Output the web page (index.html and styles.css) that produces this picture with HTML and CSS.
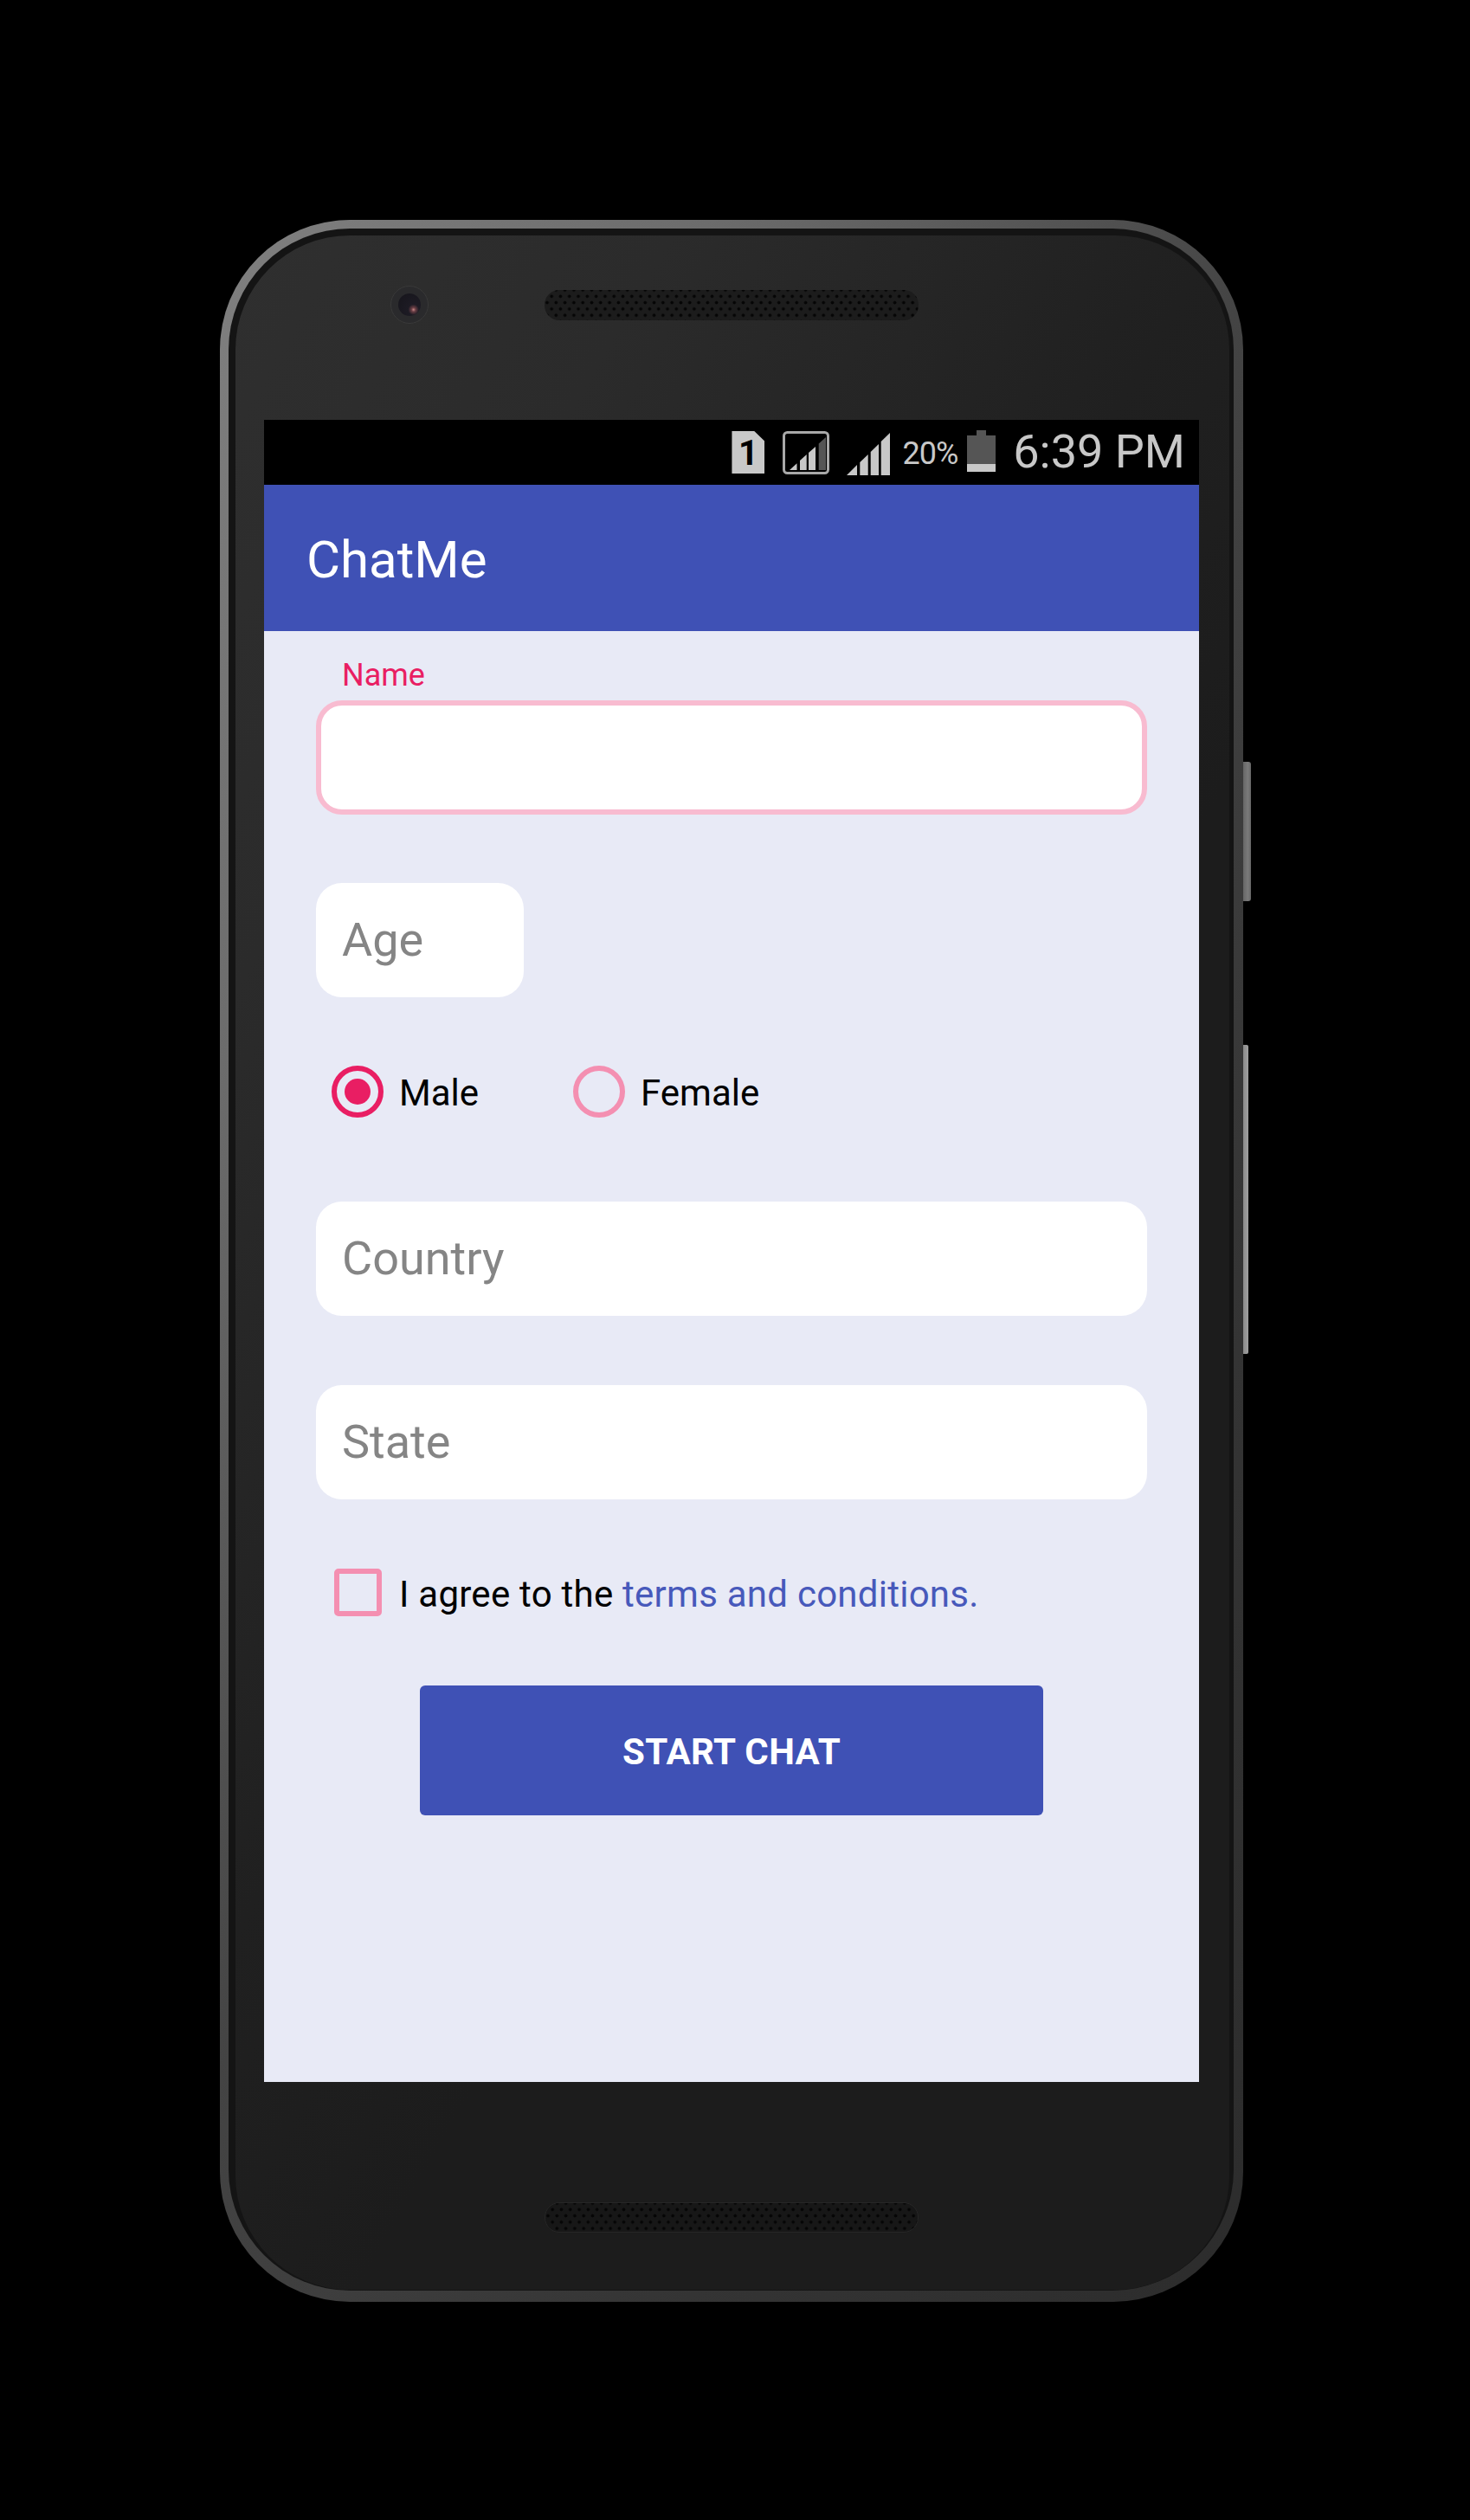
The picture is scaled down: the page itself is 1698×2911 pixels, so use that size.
FILE: index.html
```html
<!DOCTYPE html>
<html>
  <head>
    <title>ChatMe</title>
    <link rel="stylesheet" href="styles.css">
  </head>
  <body>
    <div class="device">
      <div class="phone">
        <div class="bezel">
          <div class="face">

            <div class="face-top">
              <div class="camera"><div class="lens"></div></div>
              <div class="speaker speaker-top"></div>
            </div>

            <div class="screen">
              <div class="status-bar">
                <div class="sim">1</div>
                <svg class="signal-box" width="54" height="50" viewBox="0 0 54 50">
                  <rect x="1.5" y="1.5" width="51" height="47" rx="4" fill="none" stroke="#a8a8a8" stroke-width="3"/>
                  <polygon points="8,45 16.5,45 16.5,37.3" fill="#c8c8c8"/>
                  <polygon points="20,45 27.7,45 27.7,27 20,34" fill="#c8c8c8"/>
                  <polygon points="30,45 38,45 38,18 30,25" fill="#c8c8c8"/>
                  <polygon points="41.7,45 50,45 50,7 41.7,14.5" fill="#555555"/>
                </svg>
                <svg class="signal" width="50" height="49" viewBox="0 0 50 49">
                  <polygon points="0,49 12,49 12,37" fill="#c8c8c8"/>
                  <polygon points="15.3,49 24.7,49 24.7,25 15.3,34" fill="#c8c8c8"/>
                  <polygon points="27.7,49 37,49 37,13 27.7,22" fill="#c8c8c8"/>
                  <polygon points="39.7,49 50,49 50,0 39.7,10" fill="#c8c8c8"/>
                </svg>
                <span class="battery-text">20%</span>
                <div class="battery">
                  <div class="battery-cap"></div>
                  <div class="battery-body"></div>
                </div>
                <span class="clock">6:39 PM</span>
              </div>

              <div class="app-bar">ChatMe</div>

              <div class="content">
                <label class="float-label">Name</label>
                <div class="field field-focus"></div>

                <div class="field field-age">Age</div>

                <div class="radio-row">
                  <div class="radio-item radio-male">
                    <span class="radio radio-on"></span>
                    <span class="radio-text">Male</span>
                  </div>
                  <div class="radio-item">
                    <span class="radio"></span>
                    <span class="radio-text">Female</span>
                  </div>
                </div>

                <div class="field field-country">Country</div>
                <div class="field field-state">State</div>

                <div class="agree-row">
                  <span class="checkbox"></span>
                  <span class="agree-text">I agree to the <a class="terms">terms and conditions.</a></span>
                </div>

                <button class="start-btn">START CHAT</button>
              </div>
            </div>

            <div class="face-bottom">
              <div class="speaker speaker-bottom"></div>
            </div>

          </div>
        </div>
      </div>

      <div class="side-keys">
        <div class="key-volume"></div>
        <div class="key-power"></div>
      </div>
    </div>
  </body>
</html>
```

FILE: styles.css
```css
html, body {
  margin: 0;
  background-color: #000000;
}

body {
  height: 2911px;
  padding: 254px 0 0 254px;
  box-sizing: border-box;
  font-family: Roboto, "Liberation Sans", sans-serif;
  overflow: hidden;
}

.device {
  display: flex;
  align-items: flex-start;
}

/* phone body */
.phone {
  width: 1182px;
  height: 2405px;
  box-sizing: border-box;
  padding: 10px 11px 13px 10px;
  border-radius: 150px;
  background: linear-gradient(120deg, #808080 0%, #6c6c6c 22%, #444444 48%, #343434 75%, #2c2c2c 100%);
}

.bezel {
  height: 100%;
  box-sizing: border-box;
  padding: 8px 5px 1px 8px;
  border-radius: 140px;
  background-color: #141414;
}

.face {
  height: 100%;
  border-radius: 132px;
  overflow: hidden;
  background: linear-gradient(120deg, #2f2f2f 0%, #2b2b2b 20%, #202020 45%, #1c1c1c 60%);
}

.face-top {
  height: 213px;
  box-sizing: border-box;
  padding: 58px 0 0 179px;
  display: flex;
  align-items: flex-start;
}

.camera {
  width: 44px;
  height: 44px;
  border-radius: 50%;
  background-color: #2a2a2c;
  border: 1px solid #3a3a3a;
  box-sizing: border-box;
  display: flex;
  align-items: center;
  justify-content: center;
}

.lens {
  width: 26px;
  height: 26px;
  border-radius: 50%;
  background: radial-gradient(circle at 68% 72%, #c98a8a 0, #6b3f45 9%, #1d1b24 24%, #16151b 100%);
}

.speaker {
  width: 432px;
  height: 35px;
  border-radius: 17px;
  background-color: #1c1c1c;
  background-image:
    radial-gradient(circle, #050505 1.6px, transparent 2.2px),
    radial-gradient(circle, #050505 1.6px, transparent 2.2px);
  background-size: 10.3px 14.6px;
  background-position: 3px 0, 8.15px 7.3px;
}

.speaker-top {
  margin: 5px 0 0 134px;
}

.speaker-bottom {
  background-color: #171717;
  border: 1px solid #262626;
  box-sizing: border-box;
}

.face-bottom {
  height: 240px;
  box-sizing: border-box;
  padding: 139px 0 0 357px;
}

/* screen */
.screen {
  width: 1080px;
  height: 1920px;
  margin-left: 33px;
  background-color: #e8eaf6;
}

.status-bar {
  height: 75px;
  box-sizing: border-box;
  padding-right: 16px;
  background-color: #000000;
  display: flex;
  align-items: center;
  justify-content: flex-end;
  color: #c8c8c8;
}

.sim {
  width: 38px;
  height: 49px;
  background-color: #c8c8c8;
  clip-path: polygon(0 0, 68% 0, 100% 24%, 100% 100%, 0 100%);
  color: #000000;
  font-size: 40px;
  font-weight: 700;
  line-height: 51px;
  text-align: center;
}

.signal-box {
  margin-left: 21px;
}

.signal {
  margin-left: 20px;
  margin-top: 4px;
}

.battery-text {
  margin-left: 14px;
  font-size: 36px;
  letter-spacing: -1px;
  line-height: 42px;
  margin-top: 2px;
}

.battery {
  margin-left: 11px;
  width: 33px;
  margin-top: -3px;
}

.battery-cap {
  width: 11px;
  height: 6px;
  margin: 0 auto;
  background-color: #555555;
}

.battery-body {
  height: 42px;
  background: linear-gradient(#555555 0, #555555 33px, #c8c8c8 33px);
}

.clock {
  margin-left: 20px;
  font-size: 54px;
  line-height: 64px;
  margin-top: -2px;
}

.app-bar {
  height: 169px;
  box-sizing: border-box;
  padding-left: 49px;
  background-color: #3f51b5;
  color: #ffffff;
  font-size: 60px;
  line-height: 174px;
}

/* form */
.content {
  padding: 30px 60px 0 60px;
}

.float-label {
  display: block;
  padding-left: 30px;
  font-size: 36px;
  line-height: 42px;
  color: #e91e63;
}

.field {
  height: 132px;
  box-sizing: border-box;
  padding-left: 30px;
  border-radius: 30px;
  background-color: #ffffff;
  color: #858585;
  font-size: 54px;
  line-height: 132px;
}

.field-focus {
  margin-top: 8px;
  border: 6px solid #f8bbd0;
}

.field-age {
  width: 240px;
  margin-top: 79px;
}

.field-country {
  margin-top: 97px;
}

.field-state {
  margin-top: 80px;
}

.radio-row {
  display: flex;
  align-items: center;
  height: 60px;
  margin-top: 79px;
  padding-left: 18px;
  font-size: 42px;
  color: #000000;
}

.radio-item {
  display: flex;
  align-items: center;
  gap: 18px;
}

.radio-text {
  padding-top: 2px;
}

.radio-male {
  width: 279px;
}

.radio {
  width: 60px;
  height: 60px;
  box-sizing: border-box;
  border: 6px solid #f48fb1;
  border-radius: 50%;
  display: flex;
  align-items: center;
  justify-content: center;
}

.radio-on {
  border-color: #e91e63;
}

.radio-on::after {
  content: "";
  width: 30px;
  height: 30px;
  border-radius: 50%;
  background-color: #e91e63;
}

.agree-row {
  display: flex;
  align-items: center;
  margin-top: 80px;
  padding-left: 21px;
  gap: 20px;
  font-size: 42px;
  letter-spacing: 0.25px;
  color: #000000;
}

.agree-text {
  padding-top: 3px;
}

.checkbox {
  width: 55px;
  height: 55px;
  box-sizing: border-box;
  border: 6px solid #f48fb1;
  border-radius: 5px;
}

.terms {
  color: #4759bb;
}

.start-btn {
  display: block;
  width: 720px;
  height: 150px;
  margin: 80px 0 0 120px;
  padding: 3px 0 0 0;
  border: none;
  border-radius: 6px;
  background-color: #3f51b5;
  color: #ffffff;
  font-family: Roboto, "Liberation Sans", sans-serif;
  font-size: 42px;
  font-weight: 700;
  letter-spacing: 0.4px;
}

/* buttons on the right edge */
.side-keys {
  display: flex;
  flex-direction: column;
  align-items: flex-start;
  padding-top: 626px;
}

.key-volume {
  width: 9px;
  height: 161px;
  border-radius: 0 3px 3px 0;
  background: linear-gradient(90deg, #666666, #7a7a7a 60%, #666666);
}

.key-power {
  width: 6px;
  height: 357px;
  margin-top: 166px;
  border-radius: 0 2px 2px 0;
  background: linear-gradient(90deg, #8a8a8a, #a0a0a0);
}
```
